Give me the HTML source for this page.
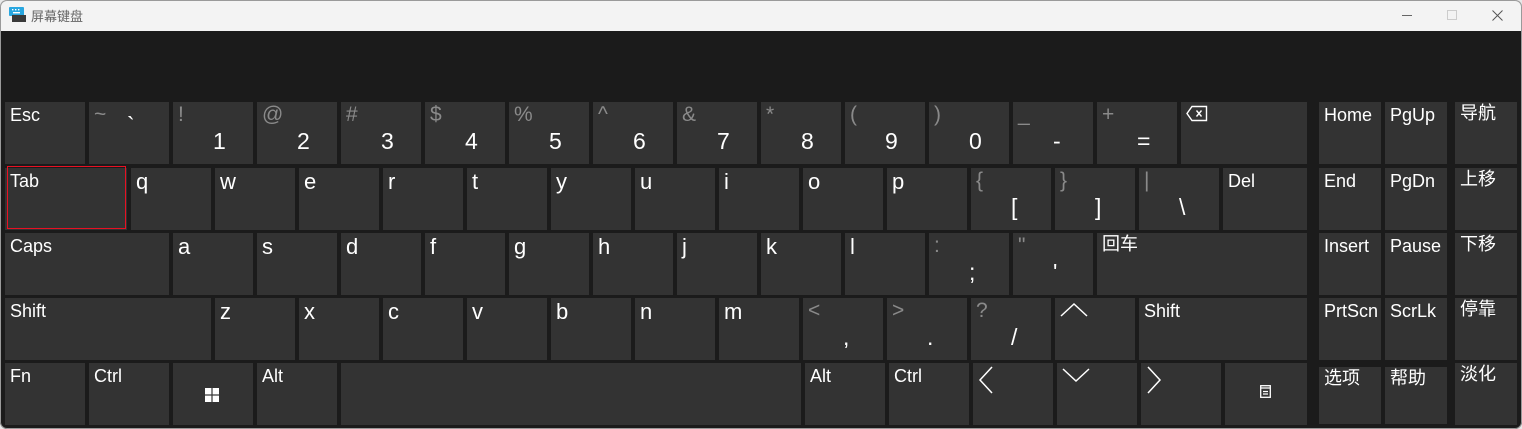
<!DOCTYPE html>
<html><head><meta charset="utf-8"><style>
*{margin:0;padding:0;box-sizing:border-box}
html,body{width:1522px;height:429px;overflow:hidden;background:#e8e8e8}
#win{position:absolute;left:0;top:0;width:1522px;height:429px;background:#1b1b1b;border-radius:7px;overflow:hidden}
#bd{position:absolute;left:0;top:0;width:1522px;height:429px;border:1px solid #9a9a9a;border-radius:7px;pointer-events:none}
#tb{position:absolute;left:0;top:0;width:1522px;height:31px;background:#f3f3f3}
#tb .tt{position:absolute;left:31px;top:6px;font:13px "Liberation Sans","Noto Sans CJK SC",sans-serif;color:#666}
.k{position:absolute;width:80px;height:62px;background:#333;color:#fff;font-family:"Liberation Sans","Noto Sans CJK SC",sans-serif;line-height:1.15}
.t{position:absolute;left:5px;top:3px;font-size:18px}
.c{top:2px;line-height:1}
.L{position:absolute;left:5px;top:1px;font-size:22px}
.s{position:absolute;left:5px;top:1px;font-size:21px;color:#8a8a8a}
.m{position:absolute;left:40px;top:26px;font-size:23px}
.n{width:62px}
svg{position:absolute}
</style></head><body><div id="win">
<div id="tb">
<svg style="left:9px;top:6px" width="17" height="17" viewBox="0 0 17 17"><rect x="0" y="1" width="15" height="9" rx="1" fill="#29a7e0"/><rect x="3" y="9" width="14" height="7" fill="#3a3a3a"/><g fill="#fff"><rect x="3" y="3" width="1.4" height="1.4"/><rect x="6" y="3" width="1.4" height="1.4"/><rect x="9" y="3" width="1.4" height="1.4"/><rect x="4" y="6" width="7" height="1.4"/></g></svg>
<div class="tt">屏幕键盘</div>
<div style="position:absolute;left:1402px;top:15px;width:10px;height:1px;background:#666"></div>
<div style="position:absolute;left:1447px;top:10px;width:10px;height:10px;border:1px solid #ccc"></div>
<svg style="left:1492px;top:10px" width="11" height="11" viewBox="0 0 11 11"><path d="M0.5 0.5L10.5 10.5M10.5 0.5L0.5 10.5" stroke="#555" stroke-width="1"/></svg>
</div>

<!-- row1 -->
<div class="k" style="left:5px;top:102px"><span class="t">Esc</span></div>
<div class="k" style="left:89px;top:102px"><span class="s">~</span><span class="m" style="top:10px;left:38px">`</span></div>
<div class="k" style="left:173px;top:102px"><span class="s">!</span><span class="m">1</span></div>
<div class="k" style="left:257px;top:102px"><span class="s">@</span><span class="m">2</span></div>
<div class="k" style="left:341px;top:102px"><span class="s">#</span><span class="m">3</span></div>
<div class="k" style="left:425px;top:102px"><span class="s">$</span><span class="m">4</span></div>
<div class="k" style="left:509px;top:102px"><span class="s">%</span><span class="m">5</span></div>
<div class="k" style="left:593px;top:102px"><span class="s">^</span><span class="m">6</span></div>
<div class="k" style="left:677px;top:102px"><span class="s">&amp;</span><span class="m">7</span></div>
<div class="k" style="left:761px;top:102px"><span class="s">*</span><span class="m">8</span></div>
<div class="k" style="left:845px;top:102px"><span class="s">(</span><span class="m">9</span></div>
<div class="k" style="left:929px;top:102px"><span class="s">)</span><span class="m">0</span></div>
<div class="k" style="left:1013px;top:102px"><span class="s">_</span><span class="m">-</span></div>
<div class="k" style="left:1097px;top:102px"><span class="s">+</span><span class="m">=</span></div>
<div class="k" style="left:1181px;top:102px;width:126px"><svg style="left:5px;top:3px" width="22" height="17" viewBox="0 0 22 17"><path d="M6 1.5H20.5V15.5H6L1 8.5Z" fill="none" stroke="#fff" stroke-width="1.4"/><path d="M10.5 5.5L15.5 11.5M15.5 5.5L10.5 11.5" stroke="#fff" stroke-width="1.4"/></svg></div>
<div class="k n" style="left:1319px;top:102px"><span class="t">Home</span></div>
<div class="k n" style="left:1385px;top:102px"><span class="t">PgUp</span></div>
<div class="k n" style="left:1455px;top:102px"><span class="t c">导航</span></div>

<!-- row2 -->
<div class="k" style="left:5px;top:168px;width:122px"><div style="position:absolute;left:2px;top:-2px;width:119px;height:63px;border:1px solid #e81123"></div><span class="t" style="left:5px">Tab</span></div>
<div class="k" style="left:131px;top:168px"><span class="L">q</span></div>
<div class="k" style="left:215px;top:168px"><span class="L">w</span></div>
<div class="k" style="left:299px;top:168px"><span class="L">e</span></div>
<div class="k" style="left:383px;top:168px"><span class="L">r</span></div>
<div class="k" style="left:467px;top:168px"><span class="L">t</span></div>
<div class="k" style="left:551px;top:168px"><span class="L">y</span></div>
<div class="k" style="left:635px;top:168px"><span class="L">u</span></div>
<div class="k" style="left:719px;top:168px"><span class="L">i</span></div>
<div class="k" style="left:803px;top:168px"><span class="L">o</span></div>
<div class="k" style="left:887px;top:168px"><span class="L">p</span></div>
<div class="k" style="left:971px;top:168px"><span class="s">{</span><span class="m">[</span></div>
<div class="k" style="left:1055px;top:168px"><span class="s">}</span><span class="m">]</span></div>
<div class="k" style="left:1139px;top:168px"><span class="s">|</span><span class="m">\</span></div>
<div class="k" style="left:1223px;top:168px;width:84px"><span class="t">Del</span></div>
<div class="k n" style="left:1319px;top:168px"><span class="t">End</span></div>
<div class="k n" style="left:1385px;top:168px"><span class="t">PgDn</span></div>
<div class="k n" style="left:1455px;top:168px"><span class="t c">上移</span></div>

<!-- row3 -->
<div class="k" style="left:5px;top:233px;width:164px"><span class="t">Caps</span></div>
<div class="k" style="left:173px;top:233px"><span class="L">a</span></div>
<div class="k" style="left:257px;top:233px"><span class="L">s</span></div>
<div class="k" style="left:341px;top:233px"><span class="L">d</span></div>
<div class="k" style="left:425px;top:233px"><span class="L">f</span></div>
<div class="k" style="left:509px;top:233px"><span class="L">g</span></div>
<div class="k" style="left:593px;top:233px"><span class="L">h</span></div>
<div class="k" style="left:677px;top:233px"><span class="L">j</span></div>
<div class="k" style="left:761px;top:233px"><span class="L">k</span></div>
<div class="k" style="left:845px;top:233px"><span class="L">l</span></div>
<div class="k" style="left:929px;top:233px"><span class="s">:</span><span class="m">;</span></div>
<div class="k" style="left:1013px;top:233px"><span class="s">"</span><span class="m">'</span></div>
<div class="k" style="left:1097px;top:233px;width:210px"><span class="t c">回车</span></div>
<div class="k n" style="left:1319px;top:233px"><span class="t">Insert</span></div>
<div class="k n" style="left:1385px;top:233px"><span class="t">Pause</span></div>
<div class="k n" style="left:1455px;top:233px"><span class="t c">下移</span></div>

<!-- row4 -->
<div class="k" style="left:5px;top:298px;width:206px"><span class="t">Shift</span></div>
<div class="k" style="left:215px;top:298px"><span class="L">z</span></div>
<div class="k" style="left:299px;top:298px"><span class="L">x</span></div>
<div class="k" style="left:383px;top:298px"><span class="L">c</span></div>
<div class="k" style="left:467px;top:298px"><span class="L">v</span></div>
<div class="k" style="left:551px;top:298px"><span class="L">b</span></div>
<div class="k" style="left:635px;top:298px"><span class="L">n</span></div>
<div class="k" style="left:719px;top:298px"><span class="L">m</span></div>
<div class="k" style="left:803px;top:298px"><span class="s">&lt;</span><span class="m">,</span></div>
<div class="k" style="left:887px;top:298px"><span class="s">&gt;</span><span class="m">.</span></div>
<div class="k" style="left:971px;top:298px"><span class="s">?</span><span class="m">/</span></div>
<div class="k" style="left:1055px;top:298px"><svg style="left:5px;top:4px" width="28" height="16" viewBox="0 0 28 16"><path d="M1 14L14 2L27 14" fill="none" stroke="#fff" stroke-width="1.5"/></svg></div>
<div class="k" style="left:1139px;top:298px;width:168px"><span class="t">Shift</span></div>
<div class="k n" style="left:1319px;top:298px"><span class="t">PrtScn</span></div>
<div class="k n" style="left:1385px;top:298px"><span class="t">ScrLk</span></div>
<div class="k n" style="left:1455px;top:298px"><span class="t c">停靠</span></div>

<!-- row5 -->
<div class="k" style="left:5px;top:363px"><span class="t">Fn</span></div>
<div class="k" style="left:89px;top:363px"><span class="t">Ctrl</span></div>
<div class="k" style="left:173px;top:363px"><svg style="left:32px;top:25px" width="14" height="14" viewBox="0 0 14 14" fill="#fff"><rect x="0" y="0" width="6.4" height="6.4"/><rect x="7.6" y="0" width="6.4" height="6.4"/><rect x="0" y="7.6" width="6.4" height="6.4"/><rect x="7.6" y="7.6" width="6.4" height="6.4"/></svg></div>
<div class="k" style="left:257px;top:363px"><span class="t">Alt</span></div>
<div class="k" style="left:341px;top:363px;width:460px"></div>
<div class="k" style="left:805px;top:363px"><span class="t">Alt</span></div>
<div class="k" style="left:889px;top:363px"><span class="t">Ctrl</span></div>
<div class="k" style="left:973px;top:363px"><svg style="left:5px;top:3px" width="16" height="28" viewBox="0 0 16 28"><path d="M14 1L2 14L14 27" fill="none" stroke="#fff" stroke-width="1.5"/></svg></div>
<div class="k" style="left:1057px;top:363px"><svg style="left:5px;top:4px" width="28" height="16" viewBox="0 0 28 16"><path d="M1 2L14 14L27 2" fill="none" stroke="#fff" stroke-width="1.5"/></svg></div>
<div class="k" style="left:1141px;top:363px"><svg style="left:5px;top:3px" width="16" height="28" viewBox="0 0 16 28"><path d="M2 1L14 14L2 27" fill="none" stroke="#fff" stroke-width="1.5"/></svg></div>
<div class="k" style="left:1225px;top:363px;width:82px"><svg style="left:35px;top:22px" width="11" height="13" viewBox="0 0 11 13"><rect x="0.7" y="0.7" width="9.6" height="11.6" fill="none" stroke="#fff" stroke-width="1.3"/><path d="M0.7 3H10.3M3 6.5H8M3 9H8" stroke="#fff" stroke-width="1.2"/></svg></div>
<div class="k n" style="left:1319px;top:367px;height:57px"><span class="t c">选项</span></div>
<div class="k n" style="left:1385px;top:367px;height:57px"><span class="t c">帮助</span></div>
<div class="k n" style="left:1455px;top:363px"><span class="t c">淡化</span></div>
<div id="bd"></div>
</div></body></html>
